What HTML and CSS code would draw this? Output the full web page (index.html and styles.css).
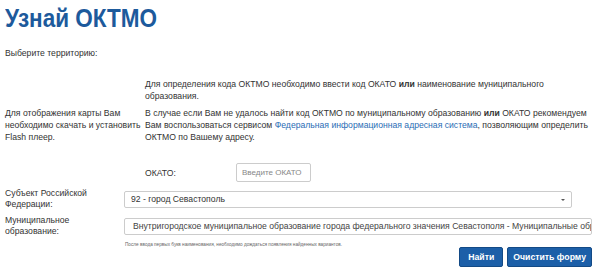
FILE: index.html
```html
<html>
<head>
<title>Узнай ОКТМО</title>
<link rel="stylesheet" href="styles.css">
</head>
<body>

<h1>Узнай ОКТМО</h1>

<p class="choose">Выберите территорию:</p>

<div class="info">
    <div></div>
    <p>Для определения кода ОКТМО необходимо ввести код ОКАТО <b>или</b> наименование муниципального образования.</p>
    <p class="flash">Для отображения карты Вам<br>необходимо скачать и установить<br>Flash плеер.</p>
    <p>В случае если Вам не удалось найти код ОКТМО по муниципальному образованию <b>или</b> ОКАТО рекомендуем Вам воспользоваться сервисом <a href="#">Федеральная информационная адресная система</a>, позволяющим определить ОКТМО по Вашему адресу.</p>
</div>

<div class="okato-row">
    <label>ОКАТО:</label>
    <input type="text" class="okato" placeholder="Введите ОКАТО">
</div>

<div class="field-row">
    <label>Субъект Российской Федерации:</label>
    <div class="select">92 - город Севастополь<span class="arrow"></span></div>
</div>

<div class="field-row">
    <label>Муниципальное образование:</label>
    <div class="muni">Внутригородское муниципальное образование города федерального значения Севастополя - Муниципальные образования</div>
</div>

<p class="hint">После ввода первых букв наименования, необходимо дождаться появления найденных вариантов.</p>

<div class="buttons">
    <button class="find">Найти</button>
    <button>Очистить форму</button>
</div>

</body>
</html>
```

FILE: styles.css
```css
body { margin: 0; padding: 0 5px; font-family: "Liberation Sans", Arial, sans-serif; font-size: 8.65px; color: #333; background: #fff; overflow: hidden; width: 600px; box-sizing: border-box; }
h1 { margin: 0; padding-top: 5px; font-family: "Liberation Sans", Arial, sans-serif; font-weight: bold; font-size: 25px; line-height: 26px; color: #1d5a9c; transform: scaleX(0.9); transform-origin: left; }
.choose { margin: 16px 0 0 0; line-height: 12px; }
.info { display: grid; grid-template-columns: 140px 1fr; row-gap: 5px; margin-top: 19px; }
.info p { margin: 0; line-height: 12px; }
.flash { white-space: nowrap; }
.info a { color: #2b6db5; text-decoration: none; }
.okato-row { display: flex; align-items: center; margin: 20px 0 0 140px; }
.okato-row label { width: 91px; }
.okato { width: 75px; height: 19px; box-sizing: border-box; border: 1px solid #ccc; border-radius: 2px; font-family: inherit; font-size: 8px; padding: 0 5px; }
.okato::placeholder { color: #888; }
.field-row { display: flex; align-items: center; margin-top: 6px; }
.field-row + .field-row { margin-top: 5px; }
.field-row label { width: 119px; flex: none; line-height: 11px; }
.select { position: relative; width: 448px; height: 17px; box-sizing: border-box; border: 1px solid #ccc; border-radius: 2px; padding-left: 6px; line-height: 15px; }
.arrow { position: absolute; right: 6px; top: 7px; border-left: 2px solid transparent; border-right: 2px solid transparent; border-top: 2px solid #555; }
.muni { flex: 1; height: 17px; box-sizing: border-box; border: 1px solid #ccc; border-radius: 2px; padding-left: 8px; line-height: 15px; white-space: nowrap; overflow: hidden; color: #444; margin-right: 3px; }
.hint { margin: 4px 0 0 120px; font-size: 4.7px; line-height: 7px; color: #666; }
.buttons { display: flex; justify-content: flex-end; gap: 4px; margin: -1px 3px 0 0; }
button { height: 20px; padding: 0 5px; background: #1c5fa8; color: #fff; border: 1px solid #134a86; border-radius: 2px; font-family: "Liberation Sans", Arial, sans-serif; font-weight: bold; font-size: 8.7px; }
button.find { min-width: 44px; }
```
